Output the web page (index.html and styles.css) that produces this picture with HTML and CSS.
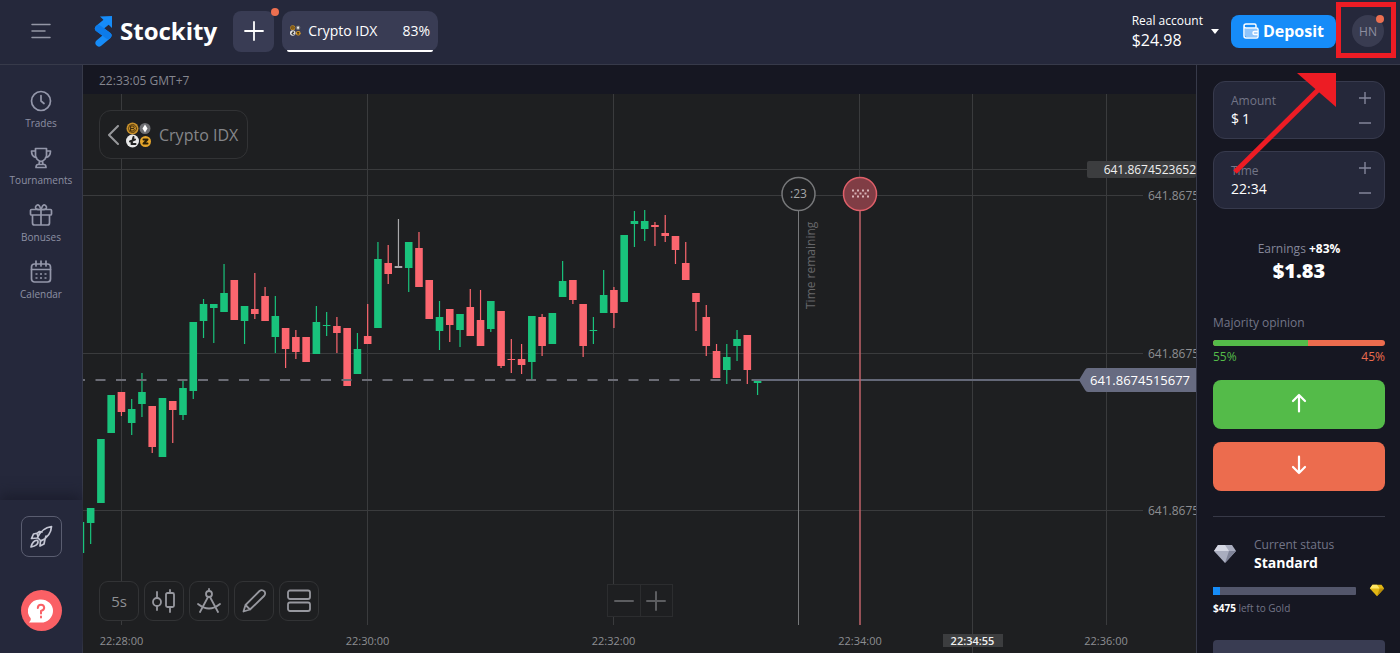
FILE: index.html
```html
<!DOCTYPE html>
<html lang="en">

<head>
    <meta charset="UTF-8">
    <meta name="viewport" content="width=device-width, initial-scale=1.0">
    <title>Stockity</title>
    <link rel="stylesheet" href="styles.css">
</head>

<body>
    <header class="header">
        <button class="menu" aria-label="Menu">
            <svg width="20" height="16" viewBox="0 0 20 16"><path d="M1 1.5h18M1 8h13M1 14.5h18"/></svg>
        </button>
        <a class="logo" href="#">
            <svg width="20" height="32" viewBox="0 0 20 32">
                <path class="logo-band" d="M13 6.500 4.500 13.500 14 20.500 5 28"/>
                <path class="logo-dark" d="M4.500 13.500 14 20.500"/>
                <path class="logo-head" d="M6 1.500 18 1v12z"/>
            </svg>
            <span>Stockity</span>
        </a>
        <button class="add" aria-label="Add asset">
            <svg width="20" height="20" viewBox="0 0 20 20"><path d="M10 1v18M1 10h18"/></svg>
            <i class="dot"></i>
        </button>
        <button class="tab">
            <svg width="11" height="11" viewBox="0 0 26 26"><use href="#coins"/></svg>
            <span>Crypto IDX</span>
            <b>83%</b>
        </button>
        <div class="account">
            <button class="balance">
                <span>
                    <small>Real account</small>
                    <strong>$24.98</strong>
                </span>
                <i class="caret"></i>
            </button>
            <button class="deposit">
                <svg width="16" height="16" viewBox="0 0 16 16">
                    <path class="wallet" d="M2 5.500h12v8.500H3.500Q2 14 2 12z"/>
                    <path d="M13 4V2.500Q13 1 11.500 1H3Q1 1 1 3T3 5h10.500Q15 5 15 6.500v7q0 1.500-1.500 1.500H3q-2 0-2-2V3M15 8.500h-3.500a1.500 1.500 0 0 0 0 3H15"/>
                </svg>
                Deposit
            </button>
            <button class="avatar">HN<i class="dot"></i></button>
        </div>
    </header>

    <div class="layout">
        <nav class="side">
            <a href="#">
                <svg width="24" height="24" viewBox="0 0 24 24"><circle cx="12" cy="12" r="9.500"/><path d="M12 6.500V12l3 2.500"/></svg>
                Trades
            </a>
            <a href="#">
                <svg width="24" height="24" viewBox="0 0 24 24"><path d="M6.500 2.500h11v7Q17 14 12 15.500 7 14 6.500 9.500zM6.500 5H2.500q0 6 5 6.500M17.500 5h4q0 6-5 6.500M10.500 15.500 10 18.500M13.500 15.500l.5 3M7 21.500q0-3 2-3h6q2 0 2 3z"/></svg>
                Tournaments
            </a>
            <a href="#">
                <svg width="24" height="24" viewBox="0 0 24 24"><path d="M3.500 12v8q0 2 2 2h13q2 0 2-2v-8M2.500 6.500h19q1 0 1 1V11q0 1-1 1h-19q-1 0-1-1V7.500q0-1 1-1zM12 6.500V22M12 6.500Q6 7 6.500 4 8 .5 10.500 3L12 6.500 13.500 3Q16 .5 17.500 4 18 7 12 6.500"/></svg>
                Bonuses
            </a>
            <a href="#">
                <svg width="24" height="24" viewBox="0 0 24 24"><rect x="2.500" y="4" width="19" height="18" rx="3"/><path d="M2.500 9.500h19M7 1v5M12 1v5M17 1v5"/><path class="dots" d="M6.500 14h2M11 14h2M15.500 14h2M6.500 18h2M11 18h2M15.500 18h2"/></svg>
                Calendar
            </a>
            <div class="side-bottom">
                <button class="rocket" aria-label="Rocket">
                    <svg width="26" height="26" viewBox="0 0 26 26"><path d="M9.500 13.500Q14 4 23.500 2.500 23 12 13 17zM10 12.500 9 9.500 11.500 7.500 14 8M10 9 5.500 10 3.500 14.500 9.500 14M13 16.500l4-1.500 1-3M12.500 17l-.5 5 4-2 1-5M9.500 16.500Q5 16 3 23 10 21.500 10 18q0-1.200-.5-1.500"/></svg>
                </button>
                <button class="help" aria-label="Help">
                    <svg width="26" height="26" viewBox="0 0 26 26"><path class="bubble" d="M13 1.500a12 11.500 0 1 1 0 23H1Q3.500 22 2.500 20A12 11.500 0 0 1 13 1.500z"/><path class="mark" d="M9.800 10Q10 6.800 13 6.800T16.200 9.800Q16 12 13 13v2.500M13 18.500v1"/></svg>
                </button>
            </div>
        </nav>

        <main class="main">
            <div class="clock">22:33:05 GMT+7</div>
            <div class="chart">
                <svg class="plot" viewBox="83 94 1113 559" preserveAspectRatio="xMaxYMin slice">
                    <defs>
                        <g id="coins">
                            <circle cx="6.500" cy="6.500" r="6" fill="#c8912c"/>
                            <circle cx="6.500" cy="6.500" r="4" fill="none" stroke="#5a3d0c"/>
                            <path d="M5 4h2.500q1.500 1 0 2.500Q9.500 8 7.500 9H5zM5 6.500h2.500" fill="none" stroke="#402c0a"/>
                            <circle cx="19" cy="6.500" r="5.500" fill="#6d6e72"/>
                            <path d="M19 2.500l2.500 4-2.500 4-2.500-4z" fill="#fff" stroke="none"/>
                            <circle cx="6.500" cy="19" r="6.500" fill="#e8e8e8"/>
                            <path d="M7.500 15 5.500 22h4M4 19.500l5-2" fill="none" stroke="#222" stroke-width="2"/>
                            <circle cx="19.500" cy="19.500" r="5.500" fill="#e5a52b"/>
                            <path d="M17.500 17.500h4l-4 4h4" fill="none" stroke="#2b2007" stroke-width="2"/>
                        </g>
                    </defs>
                    <g class="grid">
                        <path d="M121.500 94v531M367.500 94v531M613.500 94v531M859.500 94v83M1106.500 94v531M972.500 94v559M83 169.500h1004M83 195.500h1060M83 353.500h1060M83 510.500h1060"/>
                    </g>
                    <g id="candles"></g>
                    <path class="now-dash" d="M75 380h678"/>
                    <path class="now-line" d="M753 380h330"/>
                    <path class="remain" d="M798.500 211v414"/>
                    <circle class="remain-ring" cx="798.500" cy="194" r="16.500"/>
                    <text class="remain-text" x="798.500" y="198">:23</text>
                    <text class="remain-label" transform="translate(815 309) rotate(-90)">Time remaining</text>
                    <path class="expiry" d="M860 211v414"/>
                    <circle class="expiry-ring" cx="860" cy="194" r="16.500"/>
                    <path class="flag" d="M852 190.500h17M852 196.500h17"/>
                    <path class="flag" d="M854.500 193.500h12"/>

                    <g class="axis">
                        <text x="1148" y="200">641.8675</text>
                        <text x="1148" y="358">641.8675</text>
                        <text x="1148" y="515">641.8675</text>
                    </g>
                    <rect class="tag" x="1087" y="161" width="109" height="17" rx="2"/>
                    <text class="tag-text" x="1196" y="174" text-anchor="end">641.8674523652</text>
                    <path class="price" d="M1079 380l6-10q1-2 3-2h108v24h-108q-2 0-3-2z"/>
                    <text class="price-text" x="1090" y="385">641.8674515677</text>

                    <rect class="tag" x="943" y="634" width="60" height="13"/>
                    <g class="axis times">
                        <text x="121.500" y="645">22:28:00</text>
                        <text x="367.500" y="645">22:30:00</text>
                        <text x="613.500" y="645">22:32:00</text>
                        <text x="860" y="645">22:34:00</text>
                        <text class="picked" x="972.500" y="645">22:34:55</text>
                        <text x="1106" y="645">22:36:00</text>
                    </g>
                </svg>

                <button class="asset">
                    <svg class="back" width="12" height="20" viewBox="0 0 12 20"><path d="M11 1 2 10l9 9"/></svg>
                    <svg width="26" height="26" viewBox="0 0 26 26"><use href="#coins"/></svg>
                    <span>Crypto IDX</span>
                </button>

                <div class="tools">
                    <button>5s</button>
                    <button aria-label="Chart type">
                        <svg width="26" height="26" viewBox="0 0 26 26"><circle cx="6" cy="14" r="4"/><path d="M6 4v6M6 18v4M19 2v3M19 19v5"/><rect x="15" y="5" width="8" height="14" rx="1.500"/></svg>
                    </button>
                    <button aria-label="Indicators">
                        <svg width="26" height="26" viewBox="0 0 26 26"><circle cx="13" cy="6" r="3"/><path d="M13 1v2M12 9 4 24M14 9l8 15M2 16q11 9 22 0"/></svg>
                    </button>
                    <button aria-label="Drawing">
                        <svg width="26" height="26" viewBox="0 0 26 26"><path d="M2.500 23.500 4.500 17 18.500 3Q21 1 23.500 3.500 25 6 23 8L9 21.500zM4.500 17l4.500 4.500"/></svg>
                    </button>
                    <button aria-label="Layout">
                        <svg width="26" height="26" viewBox="0 0 26 26"><rect x="2" y="2.500" width="22" height="8.500" rx="2"/><rect x="2" y="14.500" width="22" height="8.500" rx="2"/></svg>
                    </button>
                </div>

                <div class="zoom">
                    <button aria-label="Zoom out"><svg width="20" height="20" viewBox="0 0 20 20"><path d="M1 10h18"/></svg></button>
                    <button aria-label="Zoom in"><svg width="20" height="20" viewBox="0 0 20 20"><path d="M1 10h18M10 1v18"/></svg></button>
                </div>
            </div>
        </main>

        <aside class="deal">
            <div class="field">
                <label for="amount">Amount</label>
                <div class="value">$ <input type="text" id="amount" value="1"></div>
                <div class="steps">
                    <button aria-label="More"><svg width="12" height="12" viewBox="0 0 12 12"><path d="M0 6h12M6 0v12"/></svg></button>
                    <button aria-label="Less"><svg width="12" height="12" viewBox="0 0 12 12"><path d="M0 6h12"/></svg></button>
                </div>
            </div>
            <div class="field">
                <label for="time">Time</label>
                <div class="value"><input type="text" id="time" value="22:34"></div>
                <div class="steps">
                    <button aria-label="Later"><svg width="12" height="12" viewBox="0 0 12 12"><path d="M0 6h12M6 0v12"/></svg></button>
                    <button aria-label="Earlier"><svg width="12" height="12" viewBox="0 0 12 12"><path d="M0 6h12"/></svg></button>
                </div>
            </div>
            <div class="earn">
                <p>Earnings <b>+83%</b></p>
                <strong>$1.83</strong>
            </div>
            <div class="opinion">
                <p>Majority opinion</p>
                <div class="bar"><i style="width: 55%"></i></div>
                <div class="split"><span>55%</span><span>45%</span></div>
            </div>
            <button class="go up" aria-label="Up">
                <svg width="16" height="20" viewBox="0 0 16 20"><path d="M8 18.500V2M2 8l6-6 6 6"/></svg>
            </button>
            <button class="go down" aria-label="Down">
                <svg width="16" height="20" viewBox="0 0 16 20"><path d="M8 1.500V18M2 12l6 6 6-6"/></svg>
            </button>
            <div class="status">
                <svg width="24" height="20" viewBox="0 0 24 20">
                    <path fill="#a9adbf" d="M5 1h14l4 6-11 12L1 7z"/>
                    <path fill="#d5d7e3" d="M5 1h7L8 7H1zM12 1l4 6H8z"/>
                    <path fill="#7f8398" d="M16 7h7L12 19z"/>
                </svg>
                <div>
                    <small>Current status</small>
                    <strong>Standard</strong>
                </div>
            </div>
            <div class="level">
                <div class="progress"><i style="width: 5%"></i></div>
                <svg width="16" height="13" viewBox="0 0 24 20">
                    <path fill="#e2b714" d="M5 1h14l4 6-11 12L1 7z"/>
                    <path fill="#ffe766" d="M5 1h7L8 7H1zM12 1l4 6H8z"/>
                    <path fill="#b98d08" d="M16 7h7L12 19z"/>
                </svg>
            </div>
            <p class="left"><b>$475</b> left to Gold</p>
            <button class="more" aria-label="Show more"></button>
        </aside>
    </div>

    <svg class="pointer" width="170" height="180" viewBox="0 0 170 180">
        <rect x="108.500" y="4.500" width="55" height="51"/>
        <path class="shaft" d="M5 172 88 90"/>
        <path class="head" d="M67 73h39v34z"/>
    </svg>
    <script src="chart.js"></script>
</body>

</html>
```

FILE: styles.css
```css
* {
    box-sizing: border-box;
}

body {
    margin: 0;
    height: 100vh;
    display: flex;
    flex-direction: column;
    position: relative;
    overflow: hidden;
    background-color: #161722;
    color: #fff;
    font-family: "Open Sans", "Noto Sans", sans-serif;
    font-size: 12px;
}

button {
    padding: 0;
    border: 0;
    background: none;
    color: inherit;
    font: inherit;
    cursor: pointer;
}

a {
    color: inherit;
    text-decoration: none;
}

p {
    margin: 0;
}

svg {
    display: block;
    flex: none;
    fill: none;
    stroke-linecap: round;
    stroke-linejoin: round;
}

.header {
    display: flex;
    align-items: center;
    flex: none;
    height: 65px;
    padding: 0 16px 2px 0;
    background-color: #25283b;
    border-bottom: 1px solid #373a4a;
}

.menu {
    width: 82px;
    display: flex;
    justify-content: center;
}

.menu svg {
    stroke: #9496a5;
    stroke-width: 1.5;
}

.logo {
    display: flex;
    align-items: center;
    gap: 6px;
    margin: 0 16px 0 12px;
    font-size: 24px;
    font-weight: 700;
    line-height: 32px;
}

.logo-band,
.logo-dark {
    stroke: #168cf8;
    stroke-width: 7;
}

.logo-dark {
    stroke: #0c7bea;
}

.logo-head {
    fill: #168cf8;
}

.add {
    position: relative;
    width: 41px;
    height: 41px;
    border-radius: 8px;
    background-color: #393c54;
    display: flex;
    align-items: center;
    justify-content: center;
}

.add svg {
    stroke: #fff;
    stroke-width: 1.8;
}

.dot {
    position: absolute;
    top: -3px;
    right: -5px;
    width: 8px;
    height: 8px;
    border-radius: 50%;
    background-color: #ec6f50;
}

.tab {
    position: relative;
    display: flex;
    align-items: center;
    gap: 7px;
    width: 156px;
    height: 41px;
    margin-left: 8px;
    padding: 0 8px 2px;
    border-radius: 10px;
    background-color: #393c54;
    font-size: 14px;
}

.tab::after {
    content: "";
    position: absolute;
    left: 5px;
    right: 5px;
    bottom: 0;
    height: 2px;
    border-radius: 0 0 4px 4px;
    background-color: #fff;
}

.tab b {
    margin-left: auto;
    font-weight: 500;
}

.account {
    display: flex;
    align-items: center;
    margin-left: auto;
}

.balance {
    display: flex;
    align-items: center;
    gap: 8px;
    margin-right: 12px;
    text-align: left;
}

.balance small {
    display: block;
    font-size: 12px;
    line-height: 18px;
}

.balance strong {
    display: block;
    font-size: 16px;
    font-weight: 500;
    line-height: 20px;
}

.caret {
    border: 4px solid transparent;
    border-top: 5px solid #fff;
    border-bottom: 0;
}

.deposit {
    display: flex;
    align-items: center;
    justify-content: center;
    gap: 4px;
    width: 105px;
    height: 33px;
    border-radius: 8px;
    background-color: #168cf8;
    font-size: 16px;
    font-weight: 700;
}

.deposit svg {
    stroke: #fff;
    stroke-width: 1.5;
}

.deposit .wallet {
    fill: #8fc5fb;
    stroke: none;
}

.avatar {
    position: relative;
    width: 32px;
    height: 32px;
    margin-left: 16px;
    border-radius: 50%;
    background-color: #393c51;
    color: #8d8fa0;
}

.avatar .dot {
    top: 0;
    right: 0;
}

.layout {
    display: flex;
    flex: 1;
    min-height: 0;
}

.side {
    display: flex;
    flex-direction: column;
    align-items: center;
    gap: 16px;
    width: 83px;
    flex: none;
    padding-top: 24px;
    background-color: #25283b;
    border-right: 1px solid #373a4a;
    color: #8d90a3;
}

.side a {
    display: flex;
    flex-direction: column;
    align-items: center;
    gap: 3px;
    font-size: 10px;
    line-height: 14px;
}

.side svg {
    stroke: #9497aa;
    stroke-width: 1.7;
}

.side .dots {
    stroke-linecap: butt;
}

.side-bottom {
    display: flex;
    flex-direction: column;
    align-items: center;
    gap: 33px;
    width: 100%;
    margin-top: auto;
    padding: 16px 0 22px;
    box-shadow: 0 -6px 12px #1c1e2e;
}

.rocket {
    display: flex;
    align-items: center;
    justify-content: center;
    width: 41px;
    height: 41px;
    border: 1px solid #5a5d70;
    border-radius: 8px;
}

.side .rocket svg {
    stroke: #c4c6d4;
}

.help {
    display: flex;
    align-items: center;
    justify-content: center;
    width: 41px;
    height: 41px;
    border-radius: 50%;
    background-color: #fa6065;
}

.side .bubble {
    fill: #fff;
    stroke: none;
}

.side .mark {
    stroke: #fa6065;
    stroke-width: 2;
}

.main {
    display: flex;
    flex-direction: column;
    flex: 1;
    min-width: 0;
}

.clock {
    height: 29px;
    padding-left: 16px;
    color: #85868f;
    line-height: 32px;
}

.chart {
    position: relative;
    flex: 1;
    min-height: 0;
    background-color: #1e1f21;
}

.plot {
    width: 100%;
    height: 100%;
    stroke-linecap: butt;
    stroke-linejoin: miter;
}

.grid {
    stroke: #3a3b3d;
}

.rise {
    fill: #19c37c;
}

.fall {
    fill: #fc666f;
}

.flat {
    fill: #a9a9ab;
}

.now-dash {
    stroke: #6b6c75;
    stroke-width: 2;
    stroke-dasharray: 10 10.5;
}

.now-line {
    stroke: #646878;
    stroke-width: 2;
}

.remain {
    stroke: #77787a;
}

.remain-ring {
    fill: #1e1f21;
    stroke: #77787a;
    stroke-width: 1.5;
}

.remain-text {
    fill: #a5a6a8;
    text-anchor: middle;
}

.remain-label {
    fill: #66676a;
    font-size: 12px;
}

.expiry {
    stroke: #c0636a;
    stroke-width: 1.5;
}

.expiry-ring {
    fill: #803d45;
    stroke: #df5f69;
    stroke-width: 1.5;
}

.flag {
    stroke: #d8b4b8;
    stroke-width: 2;
    stroke-dasharray: 2 3;
}

.axis {
    fill: #8d8e92;
}

.times {
    font-size: 11px;
    text-anchor: middle;
}

.tag {
    fill: #3c3d3f;
}

.tag-text,
.picked {
    fill: #f0f0f0;
}

.picked {
    font-weight: 600;
}

.price {
    fill: #676b81;
}

.price-text {
    fill: #fff;
    font-size: 13px;
}

.asset {
    position: absolute;
    top: 16px;
    left: 16px;
    display: flex;
    align-items: center;
    gap: 7px;
    height: 49px;
    padding: 0 9px 0 7px;
    border: 1px solid #323335;
    border-radius: 12px;
    background-color: #1e1f21;
    color: #858689;
    font-size: 16px;
}

.back {
    stroke: #97989b;
    stroke-width: 2;
}

.tools {
    position: absolute;
    left: 16px;
    bottom: 32px;
    display: flex;
    gap: 5px;
}

.tools button {
    display: flex;
    align-items: center;
    justify-content: center;
    width: 40px;
    height: 40px;
    border: 1px solid #323335;
    border-radius: 9px;
    background-color: #1e1f21;
    color: #8f9093;
    font-size: 15px;
}

.tools svg {
    stroke: #97989f;
    stroke-width: 1.8;
}

.zoom {
    position: absolute;
    left: 50%;
    bottom: 36px;
    display: flex;
    transform: translateX(-50%);
    border: 1px solid #2c2d2f;
    background-color: #1e1f21;
}

.zoom button {
    display: flex;
    align-items: center;
    justify-content: center;
    width: 32px;
    height: 31px;
}

.zoom button + button {
    border-left: 1px solid #2c2d2f;
}

.zoom svg {
    stroke: #5c5d60;
    stroke-width: 2;
}

.deal {
    display: flex;
    flex-direction: column;
    width: 204px;
    flex: none;
    padding: 16px 15px 0 16px;
    border-left: 1px solid #373a4a;
    background-color: #161722;
    overflow: hidden;
}

.field {
    position: relative;
    flex: none;
    height: 58px;
    margin-bottom: 12px;
    padding: 10px 17px;
    border: 1px solid #373a4d;
    border-radius: 12px;
    background-color: #25283a;
}

.field label {
    display: block;
    color: #737587;
    line-height: 18px;
}

.value {
    display: flex;
    gap: 3px;
    font-size: 14px;
    line-height: 18px;
}

.value input {
    width: 60px;
    height: 18px;
    padding: 0;
    border: 0;
    outline: 0;
    background: none;
    color: #fff;
    font: inherit;
}

.steps {
    position: absolute;
    top: 10px;
    right: 13px;
    display: flex;
    flex-direction: column;
    gap: 13px;
}

.steps svg {
    stroke: #83859a;
    stroke-width: 1.4;
}

.earn {
    margin-top: 19px;
    text-align: center;
    color: #85879a;
    line-height: 18px;
}

.earn b {
    color: #fff;
}

.earn strong {
    color: #fff;
    font-size: 20px;
    font-weight: 800;
    line-height: 26px;
}

.opinion {
    margin-top: 30px;
    color: #737587;
}

.opinion p {
    line-height: 18px;
}

.bar {
    height: 6px;
    margin-top: 8px;
    border-radius: 3px;
    background-color: #ec6c4e;
    overflow: hidden;
}

.bar i,
.progress i {
    display: block;
    height: 100%;
    background-color: #54bb49;
}

.split {
    display: flex;
    justify-content: space-between;
    color: #54bb49;
    line-height: 22px;
}

.split span:last-child {
    color: #ec6c4e;
}

.go {
    display: flex;
    align-items: center;
    justify-content: center;
    flex: none;
    height: 49px;
    padding-bottom: 4px;
    border-radius: 8px;
}

.go svg {
    stroke: #fff;
    stroke-width: 2.2;
}

.up {
    margin-top: 12px;
    background-color: #54bb49;
}

.down {
    margin-top: 13px;
    background-color: #ec6c4e;
}

.status {
    display: flex;
    align-items: center;
    gap: 17px;
    margin-top: 25px;
    padding-top: 19px;
    border-top: 1px solid #373947;
}

.status small {
    display: block;
    color: #737587;
    font-size: 12px;
    line-height: 18px;
}

.status strong {
    display: block;
    font-size: 14px;
    line-height: 18px;
}

.level {
    display: flex;
    align-items: center;
    gap: 13px;
    margin-top: 12px;
}

.progress {
    flex: 1;
    height: 8px;
    border-radius: 1px;
    background-color: #53566b;
}

.progress i {
    background-color: #168cf8;
}

.left {
    margin-top: 4px;
    color: #737587;
    font-size: 10px;
    line-height: 14px;
}

.left b {
    color: #fff;
}

.more {
    flex: none;
    height: 48px;
    margin-top: 25px;
    border-radius: 4px;
    background-color: #393c52;
}

.pointer {
    position: absolute;
    top: 0;
    right: 0;
    pointer-events: none;
    stroke: #ed1c24;
    stroke-width: 5;
    stroke-linecap: butt;
    stroke-linejoin: miter;
}

.pointer .head {
    fill: #ed1c24;
    stroke: none;
}
```

FILE: chart.js
```js
// type, high, body top, body bottom, low
var candles = [
    ["rise", 522, 522, 553, 553],
    ["rise", 508, 508, 523, 544],
    ["rise", 439, 439, 503, 503],
    ["rise", 395, 395, 433, 433],
    ["fall", 392, 392, 412, 416],
    ["rise", 399, 409, 423, 435],
    ["rise", 373, 392, 404, 417],
    ["fall", 406, 406, 447, 453],
    ["rise", 398, 398, 457, 457],
    ["fall", 401, 401, 410, 443],
    ["rise", 380, 388, 415, 420],
    ["rise", 322, 322, 391, 399],
    ["rise", 299, 304, 321, 338],
    ["rise", 304, 304, 308, 343],
    ["rise", 264, 293, 312, 312],
    ["fall", 280, 280, 320, 320],
    ["rise", 306, 306, 321, 344],
    ["fall", 273, 309, 314, 319],
    ["fall", 287, 296, 321, 321],
    ["rise", 296, 316, 337, 353],
    ["fall", 328, 328, 349, 368],
    ["fall", 330, 337, 352, 359],
    ["fall", 337, 337, 362, 362],
    ["rise", 306, 322, 354, 354],
    ["rise", 312, 325, 326, 336],
    ["fall", 317, 326, 333, 353],
    ["fall", 328, 328, 386, 386],
    ["rise", 333, 349, 374, 374],
    ["fall", 304, 336, 344, 344],
    ["rise", 242, 259, 328, 328],
    ["fall", 245, 263, 274, 284],
    ["flat", 219, 266, 268, 268],
    ["rise", 242, 242, 268, 292],
    ["fall", 232, 248, 287, 287],
    ["fall", 280, 280, 319, 319],
    ["rise", 301, 317, 331, 350],
    ["fall", 309, 309, 325, 342],
    ["rise", 314, 314, 330, 347],
    ["fall", 289, 307, 336, 336],
    ["fall", 290, 320, 346, 346],
    ["rise", 301, 301, 329, 332],
    ["fall", 311, 311, 366, 368],
    ["fall", 339, 359, 360, 373],
    ["fall", 344, 359, 365, 374],
    ["rise", 316, 316, 362, 379],
    ["fall", 314, 317, 346, 356],
    ["rise", 313, 313, 344, 344],
    ["rise", 261, 281, 297, 297],
    ["fall", 280, 280, 300, 304],
    ["fall", 304, 304, 346, 357],
    ["rise", 317, 330, 331, 344],
    ["rise", 270, 295, 313, 313],
    ["fall", 287, 290, 313, 328],
    ["rise", 235, 235, 302, 302],
    ["rise", 211, 221, 224, 247],
    ["rise", 210, 221, 229, 241],
    ["fall", 222, 225, 227, 246],
    ["fall", 215, 233, 236, 242],
    ["fall", 236, 236, 250, 264],
    ["fall", 242, 263, 280, 280],
    ["fall", 293, 293, 302, 331],
    ["fall", 305, 317, 346, 356],
    ["fall", 344, 351, 378, 378],
    ["rise", 344, 357, 370, 384],
    ["rise", 330, 339, 346, 361],
    ["fall", 335, 335, 370, 384],
    ["rise", 380, 380, 383, 395]
]
var start = 80.4
var step = 10.26
var html = ""
for (var i = 0; i < candles.length; i++) {
    var c = candles[i]
    var x = start + i * step
    html += `<rect class="${c[0]}" x="${x - 0.6}" y="${c[1]}" width="1.2" height="${c[4] - c[1]}"/>`
    html += `<rect class="${c[0]}" x="${x - 3.8}" y="${c[2]}" width="7.6" height="${c[3] - c[2]}"/>`
}
document.getElementById("candles").innerHTML = html
```
